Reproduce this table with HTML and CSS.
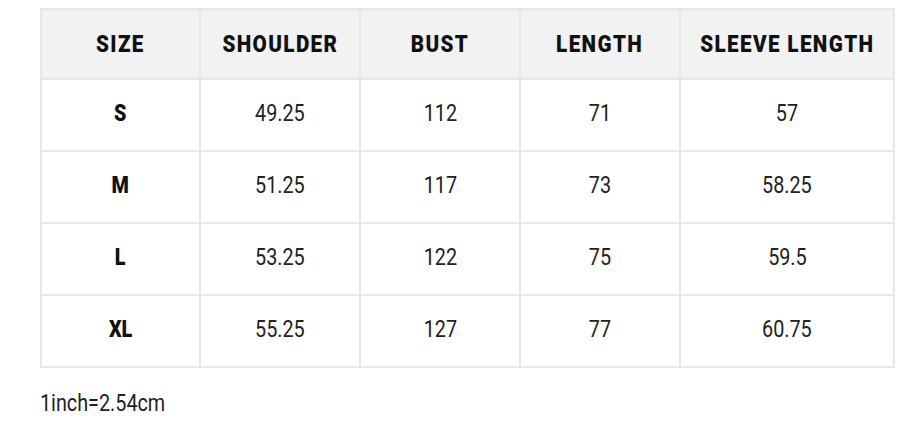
FILE: index.html
```html
<!DOCTYPE html>
<html>
<head>
<meta charset="utf-8">
<link rel="stylesheet" href="styles.css">
</head>
<body>
<div class="page">
  <table class="size-table">
    <colgroup>
      <col class="c1"><col class="c2"><col class="c3"><col class="c4"><col class="c5">
    </colgroup>
    <thead>
      <tr><th><span class="t">SIZE</span></th><th><span class="t">SHOULDER</span></th><th><span class="t">BUST</span></th><th><span class="t">LENGTH</span></th><th><span class="t">SLEEVE LENGTH</span></th></tr>
    </thead>
    <tbody>
      <tr><th><span class="t">S</span></th><td><span class="t">49.25</span></td><td><span class="t">112</span></td><td><span class="t">71</span></td><td><span class="t">57</span></td></tr>
      <tr><th><span class="t">M</span></th><td><span class="t">51.25</span></td><td><span class="t">117</span></td><td><span class="t">73</span></td><td><span class="t">58.25</span></td></tr>
      <tr><th><span class="t">L</span></th><td><span class="t">53.25</span></td><td><span class="t">122</span></td><td><span class="t">75</span></td><td><span class="t">59.5</span></td></tr>
      <tr><th><span class="t">XL</span></th><td><span class="t">55.25</span></td><td><span class="t">127</span></td><td><span class="t">77</span></td><td><span class="t">60.75</span></td></tr>
    </tbody>
  </table>
  <p class="note"><span class="t">1inch=2.54cm</span></p>
</div>
</body>
</html>
```
FILE: styles.css
```css
html, body { margin: 0; padding: 0; background: #fff; }
.page {
  padding: 8px 20px 0 40px;
  font-family: Roboto, "Liberation Sans", sans-serif;
  color: #1a1a1a;
}
.t {
  display: inline-block;
  transform: scaleX(0.86);
  white-space: nowrap;
}
.size-table {
  border-collapse: collapse;
  width: 853px;
  table-layout: fixed;
}
.c1 { width: 159px; }
.c2, .c3, .c4 { width: 160px; }
.c5 { width: 214px; }
.size-table th, .size-table td {
  border: 2px solid #e8e7e2;
  height: 67px;
  padding: 0 0 3px;
  text-align: center;
  vertical-align: middle;
}
.size-table thead th {
  background: #f2f2f2;
  font-size: 24px;
  font-weight: 900;
  letter-spacing: 1.6px;
  color: #111;
  height: 68px;
  padding: 0;
}
.size-table tbody th {
  font-size: 23px;
  font-weight: 900;
  color: #111;
}
.size-table td {
  font-size: 23px;
  font-weight: 400;
  color: #222;
}
.note {
  margin: 22px 0 0;
  font-size: 23px;
  color: #222;
}
.note .t { transform-origin: left center; }
```
